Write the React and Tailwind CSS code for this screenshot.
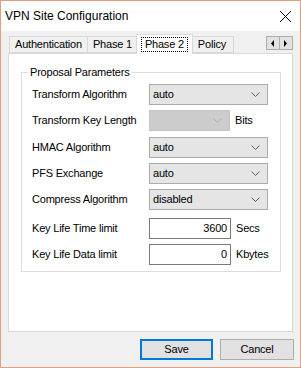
import React from "react";

function Chevron({ color = "#606060" }) {
  return (
    <svg width="9" height="6" viewBox="0 0 9 6" className="block">
      <polyline points="0.5,0.5 4.5,4.5 8.5,0.5" fill="none" stroke={color} strokeWidth="1" />
    </svg>
  );
}

function Select({ value, disabled }) {
  return (
    <div
      className={
        "flex h-[21px] items-center justify-between border pl-[3px] pr-[7px] " +
        (disabled ? "w-[81px] border-[#c4c4c4] bg-[#cccccc]" : "w-[119px] border-[#acacac] bg-[#e5e5e5]")
      }
    >
      <span>{value}</span>
      <Chevron color={disabled ? "#b0b0b0" : "#606060"} />
    </div>
  );
}

function Row({ label, children, className = "" }) {
  return (
    <div className={"flex h-[21px] items-center " + className}>
      <div className="w-[127px] pl-[10px]">{label}</div>
      <div className="flex items-center">{children}</div>
    </div>
  );
}

function Tab({ label, active, pad = "px-[5px]" }) {
  if (active) {
    return (
      <div className="relative z-10 -mx-[2px] -mb-px flex h-[20px] items-start border border-b-0 border-[#d9d9d9] bg-white px-[4px] pt-[2px]">
        <span className="border border-dotted border-black px-[3px] leading-[13px]">{label}</span>
      </div>
    );
  }
  return (
    <div className={"mt-[3px] flex h-[17px] items-center border border-[#d9d9d9] bg-[#f0f0f0] -ml-px first:ml-0 " + pad}>
      {label}
    </div>
  );
}

export default function App() {
  return (
    <div
      className="flex h-[368px] w-[301px] flex-col border border-[#e49d7e] bg-[#f0f0f0] text-[11px] tracking-[-0.2px] text-black"
      style={{ fontFamily: '"Liberation Sans", Arial, sans-serif' }}
    >
      <div className="flex h-[30px] items-center justify-between bg-white pl-[4px] pr-[8px]">
        <span className="text-[12px] tracking-normal">VPN Site Configuration</span>
        <svg width="13" height="13" viewBox="0 0 13 13">
          <path d="M1 1 L12 12 M12 1 L1 12" stroke="#000" strokeWidth="1" />
        </svg>
      </div>

      <div className="mt-[2px] flex items-end pl-[8px] pr-[7px]">
        <div className="flex items-end">
          <Tab label="Authentication" />
          <Tab label="Phase 1" />
          <Tab label="Phase 2" active />
          <Tab label="Policy" pad="px-[7px]" />
        </div>
        <div className="ml-auto mb-[3px] flex h-[14px]">
          <div className="flex w-[14px] items-center justify-center border border-[#adadad] bg-[#e1e1e1]">
            <svg width="4" height="7" viewBox="0 0 4 7"><path d="M3 0 L0 3.5 L3 7 Z" fill="#000" /></svg>
          </div>
          <div className="-ml-px flex w-[14px] items-center justify-center border border-[#adadad] bg-[#e1e1e1]">
            <svg width="4" height="7" viewBox="0 0 4 7"><path d="M0 0 L3 3.5 L0 7 Z" fill="#000" /></svg>
          </div>
        </div>
      </div>

      <div className="mx-[7px] h-[279px] border border-[#d9d9d9] bg-white pl-[12px] pr-[11px] pt-[18px]">
        <div className="relative h-[200px] border border-[#dcdcdc] pt-[11px]">
          <span className="absolute -top-[8px] left-[6px] bg-white px-[2px] leading-[14px]">Proposal Parameters</span>
          <div className="flex flex-col gap-[5px]">
            <Row label="Transform Algorithm">
              <Select value="auto" />
            </Row>
            <Row label="Transform Key Length">
              <Select value="" disabled />
              <span className="ml-[5px]">Bits</span>
            </Row>
            <Row label="HMAC Algorithm" className="mt-px">
              <Select value="auto" />
            </Row>
            <Row label="PFS Exchange">
              <Select value="auto" />
            </Row>
            <Row label="Compress Algorithm">
              <Select value="disabled" />
            </Row>
            <Row label="Key Life Time limit" className="mt-[3px]">
              <div className="flex h-[21px] w-[82px] items-center justify-end border border-[#7a7a7a] bg-white pr-[3px]">3600</div>
              <span className="ml-[5px]">Secs</span>
            </Row>
            <Row label="Key Life Data limit">
              <div className="flex h-[21px] w-[82px] items-center justify-end border border-[#7a7a7a] bg-white pr-[3px]">0</div>
              <span className="ml-[5px]">Kbytes</span>
            </Row>
          </div>
        </div>
      </div>

      <div className="mt-[7px] flex justify-end gap-[7px] pr-[6px]">
        <button className="h-[21px] w-[73px] border-2 border-[#0078d7] bg-[#e1e1e1]">Save</button>
        <button className="h-[21px] w-[74px] border border-[#adadad] bg-[#e1e1e1]">Cancel</button>
      </div>
    </div>
  );
}
